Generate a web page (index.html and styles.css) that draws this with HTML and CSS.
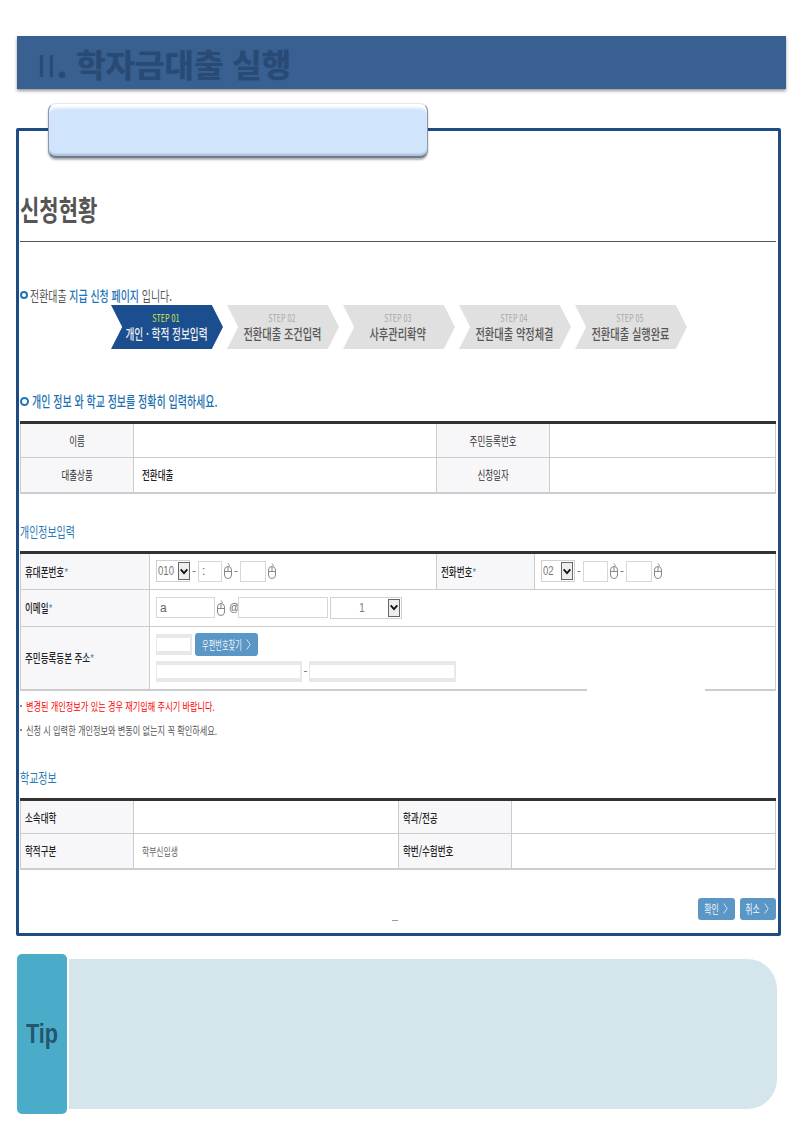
FILE: index.html
```html
<!DOCTYPE html>
<html lang="ko">
<head>
<meta charset="utf-8">
<title>학자금대출 실행</title>
<link rel="stylesheet" href="styles.css">
</head>
<body>
<svg class="defs" width="0" height="0" aria-hidden="true">
  <symbol id="mouse" viewBox="0 0 8 16">
    <path d="M4 0.5C4 1.5 5.5 1.5 5.5 3" fill="none" stroke="#888"/>
    <rect x="0.5" y="3.5" width="7" height="12" rx="3.5" fill="#fff" stroke="#888"/>
    <path d="M0.5 8.5H7.5M4 3.5V8.5" fill="none" stroke="#888"/>
  </symbol>
  <symbol id="chev" viewBox="0 0 12 12">
    <path d="M2 3.5L6 8L10 3.5" fill="none" stroke="#111" stroke-width="2.2"/>
  </symbol>
  <symbol id="more" viewBox="0 0 5 11">
    <path d="M0.7 0.5L4.2 5.5L0.7 10.5" fill="none" stroke="currentColor"/>
  </symbol>
</svg>
<main class="page">
  <header class="banner"><h1 class="banner-title"><span class="roman">II</span>. 학자금대출 실행</h1></header>

  <section class="panel">
    <div class="panel-tab"></div>
    <h2 class="page-title"><span class="sq">신청현황</span></h2>
    <p class="intro"><i class="dot"></i><span class="sq">전환대출 <b>지급 신청 페이지</b> 입니다.</span></p>

    <ol class="steps">
      <li class="step step-on"><span class="step-no">STEP 01</span><span class="step-name"><span class="sq-c">개인 · 학적 정보입력</span></span></li>
      <li class="step"><span class="step-no">STEP 02</span><span class="step-name"><span class="sq-c">전환대출 조건입력</span></span></li>
      <li class="step"><span class="step-no">STEP 03</span><span class="step-name"><span class="sq-c">사후관리확약</span></span></li>
      <li class="step"><span class="step-no">STEP 04</span><span class="step-name"><span class="sq-c">전환대출 약정체결</span></span></li>
      <li class="step"><span class="step-no">STEP 05</span><span class="step-name"><span class="sq-c">전환대출 실행완료</span></span></li>
    </ol>

    <p class="guide"><i class="dot dot-lg"></i><span class="sq">개인 정보 와 학교 정보를 정확히 입력하세요.</span></p>

    <table class="grid grid-a">
      <colgroup><col class="c113"><col class="c303"><col class="c113"><col></colgroup>
      <tr><th><span class="sq-c">이름</span></th><td></td><th><span class="sq-c">주민등록번호</span></th><td></td></tr>
      <tr><th><span class="sq-c">대출상품</span></th><td class="strong"><span class="sq">전환대출</span></td><th><span class="sq-c">신청일자</span></th><td></td></tr>
    </table>

    <h3 class="sub sub-a"><span class="sq">개인정보입력</span></h3>
    <table class="grid grid-b">
      <colgroup><col class="c129"><col class="c287"><col class="c98"><col></colgroup>
      <tr class="r-38">
        <th class="left"><span class="sq">휴대폰번호<em>*</em></span></th>
        <td><div class="field">
          <div class="sel w34"><span>010</span><b><svg width="11" height="11"><use href="#chev"/></svg></b></div>
          <span class="dash">-</span><input class="in w24" value=":" aria-label="휴대폰 가운데"><svg class="mouse"><use href="#mouse"/></svg>
          <span class="dash">-</span><input class="in w26" aria-label="휴대폰 끝"><svg class="mouse"><use href="#mouse"/></svg>
        </div></td>
        <th class="left"><span class="sq">전화번호<em>*</em></span></th>
        <td><div class="field">
          <div class="sel w34"><span>02</span><b><svg width="11" height="11"><use href="#chev"/></svg></b></div>
          <span class="dash">-</span><input class="in w25" aria-label="전화 가운데"><svg class="mouse"><use href="#mouse"/></svg>
          <span class="dash">-</span><input class="in w26" aria-label="전화 끝"><svg class="mouse"><use href="#mouse"/></svg>
        </div></td>
      </tr>
      <tr class="r-37">
        <th class="left"><span class="sq">이메일<em>*</em></span></th>
        <td colspan="3"><div class="field">
          <input class="in w59" value="a" aria-label="이메일 아이디"><svg class="mouse"><use href="#mouse"/></svg>
          <span class="at">@</span><input class="in w90" aria-label="이메일 도메인">
          <div class="sel w72"><span class="mid">1</span><b><svg width="11" height="11"><use href="#chev"/></svg></b></div>
        </div></td>
      </tr>
      <tr class="r-64">
        <th class="left"><span class="sq">주민등록등본 주소<em>*</em></span></th>
        <td colspan="3">
          <div class="field addr-top"><input class="in fat w36" aria-label="우편번호"><a class="btn btn-zip"><span class="btn-text zip-text">우편번호찾기</span><svg class="more"><use href="#more"/></svg></a></div>
          <div class="field addr-bot"><input class="in fat w146" aria-label="주소"><span class="dash dash-a">-</span><input class="in fat w147" aria-label="상세주소"></div>
        </td>
      </tr>
    </table>
    <i class="gap"></i>

    <ul class="notes">
      <li class="red"><span class="sq">변경된 개인정보가 있는 경우 재기입해 주시기 바랍니다.</span></li>
      <li><span class="sq">신청 시 입력한 개인정보와 변동이 없는지 꼭 확인하세요.</span></li>
    </ul>

    <h3 class="sub sub-b"><span class="sq">학교정보</span></h3>
    <table class="grid grid-c">
      <colgroup><col class="c113"><col class="c265"><col class="c113"><col></colgroup>
      <tr><th class="left"><span class="sq">소속대학</span></th><td></td><th class="left"><span class="sq">학과/전공</span></th><td></td></tr>
      <tr><th class="left"><span class="sq">학적구분</span></th><td class="soft"><span class="sq">학부신입생</span></td><th class="left"><span class="sq">학번/수험번호</span></th><td></td></tr>
    </table>

    <div class="actions">
      <a class="btn btn-act w37"><span class="btn-text">확인</span><svg class="more"><use href="#more"/></svg></a>
      <a class="btn btn-act w36b"><span class="btn-text">취소</span><svg class="more"><use href="#more"/></svg></a>
    </div>
    <i class="tick"></i>
  </section>

  <aside class="tip">
    <div class="tip-tab"><span class="tip-word">Tip</span></div>
    <div class="tip-body"></div>
  </aside>
</main>
</body>
</html>
```

FILE: styles.css
```css
* { box-sizing: border-box; }
html, body { margin: 0; padding: 0; background: #fff; }
body { font-family: "Noto Sans CJK KR", "Noto Sans", sans-serif; color: #333; font-size: 13px; }
.defs { position: absolute; }
.page { padding: 36px 16px 21px; width: 802px; height: 1135px; overflow: hidden; }

.sq, .sq-c { display: inline-block; white-space: nowrap; transform: scaleX(.71); }
.sq { transform-origin: left center; }
.sq-c { transform-origin: center center; }

.banner { margin-left: 1px; width: 769px; height: 53px; background: #386192; box-shadow: 0 2px 3px rgba(0,0,0,.4); padding-left: 20px; }
.banner-title { margin: 0; font-size: 32px; line-height: 54px; font-weight: 700; color: #294a75; white-space: nowrap; text-shadow: 0 0 1px #294a75; }
.roman { font-weight: 400; font-family: "Liberation Sans", sans-serif; letter-spacing: 1px; text-shadow: none; }

.panel { position: relative; margin-top: 39px; width: 765px; height: 808px; border: 3px solid #1f4a82; border-radius: 2px; padding: 0 2px 0 1px; }
.panel-tab { position: absolute; left: 29px; top: -28px; width: 380px; height: 55px; background: #d0e4fc; border: 1px solid #8b97a8; border-top-color: #e8e8e8; border-bottom: 2px solid #6e7b8e; border-radius: 8px; box-shadow: inset 0 5px 3px -1px #fff, inset 0 -3px 2px -1px #a9bdd6, 0 2px 2px rgba(0,0,0,.3); }

.page-title { margin: 58px 0 0; height: 53px; padding-left: 0; border-bottom: 1px solid #555; font-size: 28px; line-height: 40px; font-weight: 700; color: #555; }
.page-title .sq { transform: scaleX(.75); }

.dot { display: inline-block; flex: none; width: 8px; height: 8px; border: 2px solid #1c75b8; border-radius: 50%; background: #fff; }
.dot-lg { width: 9px; height: 9px; }
.intro { display: flex; align-items: center; gap: 2px; margin: 44px 0 0; height: 18px; font-size: 14px; line-height: 18px; color: #555; }
.intro b { font-weight: 500; color: #1c75b8; }

.steps { display: flex; gap: 4px; list-style: none; margin: 1px 0 0 91px; padding: 0; }
.step { width: 112px; height: 44px; background: #e0e0e0; clip-path: polygon(0 0, 90% 0, 100% 50%, 90% 100%, 0 100%, 10% 50%); text-align: center; padding: 6px 5px 0 3px; }
.step-no { display: block; white-space: nowrap; font-size: 10px; line-height: 13px; color: #aaa; transform: scaleX(.72); }
.step-name { display: flex; justify-content: center; white-space: nowrap; font-size: 14px; line-height: 18px; color: #555; font-weight: 500; }
.step-name .sq-c { flex: none; transform: scaleX(.73); }
.step-on { background: #1b4e8e; }
.step-on .step-no { color: #d8e845; }
.step-on .step-name { color: #f0f0f0; }
.step-on .step-name .sq-c { transform: scaleX(.69); }

.guide { display: flex; align-items: center; gap: 3px; margin: 42px 0 0; height: 20px; font-size: 14.5px; line-height: 20px; font-weight: 500; color: #1c70b0; }
.guide .sq { transform: scaleX(.69); }

.grid { width: 756px; table-layout: fixed; border-collapse: collapse; border-top: 3px solid #333; }
.grid th, .grid td { border: 1px solid #ccc; border-top: 0; padding: 0; font-size: 12px; font-weight: 400; height: 35px; color: #333; vertical-align: middle; }
.grid tr:last-child th, .grid tr:last-child td { border-bottom-width: 2px; }
.grid th { background: #f7f7f9; }
.grid th.left { text-align: left; padding-left: 4px; font-weight: 500; color: #222; }
.grid td.strong { padding-left: 8px; color: #222; font-weight: 500; }
.grid td.soft { padding-left: 8px; color: #666; font-size: 11px; }
.grid em { color: #5a96c6; font-style: normal; }
.c113 { width: 113px; }
.c129 { width: 129px; }
.c98 { width: 98px; }
.c303 { width: 303px; }
.c287 { width: 287px; }
.c265 { width: 265px; }

.grid-a { margin-top: 10px; }
.grid-c { margin-top: 11px; }
.grid-c tr:first-child th, .grid-c tr:first-child td { height: 34px; }

.sub { margin: 0; height: 20px; font-size: 14px; line-height: 20px; font-weight: 400; color: #2a7ab8; }
.sub-a { margin-top: 27px; }
.grid-b { margin-top: 10px; }
.sub-b { margin-top: 25px; }
.r-38 th, .r-38 td { height: 37px; }
.r-37 th, .r-37 td { height: 37px; }
.r-64 th, .r-64 td { height: 64px; }
.grid-b td { padding-left: 6px; }

.field { display: flex; align-items: center; }
.in { display: block; height: 21px; padding: 0 3px; border: 1px solid #d8d8d8; background: #fff; font: 12px "Liberation Sans", sans-serif; color: #666; outline: 0; border-radius: 0; }
.fat { border: 4px solid #e8e8e8; border-right-width: 2px; border-left-width: 1px; }
.w24 { width: 24px; }
.w25 { width: 25px; }
.w26 { width: 26px; }
.w36 { width: 36px; }
.w59 { width: 59px; }
.w90 { width: 90px; }
.w146 { width: 146px; }
.w147 { width: 147px; }
.sel { display: flex; align-items: center; justify-content: space-between; height: 22px; padding: 1px; border: 1px solid #d0d0d0; background: #fff; font: 12px "Liberation Sans", sans-serif; color: #777; }
.sel span { transform: scaleX(.8); transform-origin: left center; }
.sel span.mid { padding-left: 34px; }
.sel b { display: flex; align-items: center; justify-content: center; width: 12px; height: 18px; background: #eee; border: 1px solid #666; }
.w34 { width: 34px; }
.w72 { width: 72px; margin-left: 2px; }
.dash { width: 8px; text-align: center; font-size: 11px; line-height: 1; color: #555; }
.dash-a { width: 7px; }
.at { width: 13px; padding-left: 4px; font: 10px "Liberation Sans", sans-serif; color: #666; }
.mouse { display: block; flex: none; width: 8px; height: 16px; margin: 0 0 0 2px; }
.more { display: block; flex: none; width: 5px; height: 11px; color: #d4e3f0; }

.addr-top { gap: 3px; }
.addr-bot { margin-top: 5px; }
.btn { display: flex; align-items: center; justify-content: center; gap: 4px; background: #5a96c6; border-radius: 3px; color: #eef4fa; font-size: 12px; white-space: nowrap; }
.btn-text { display: flex; justify-content: center; width: 15px; white-space: nowrap; transform: scaleX(.66); }
.btn-act .btn-text { margin-left: -2px; }
.zip-text { width: 40px; transform: scaleX(.6); }
.btn-zip { width: 63px; height: 23px; }
.gap { display: block; position: absolute; left: 568px; top: 558px; width: 118px; height: 4px; background: #fff; }

.notes { list-style: none; margin: 3px 0 0; padding: 0; font-size: 11.5px; line-height: 18px; color: #555; }
.notes li { position: relative; height: 24px; padding: 3px 0 0 6px; }
.notes li::before { content: ""; position: absolute; left: 0; top: 11px; width: 2px; height: 2px; background: #888; }
.red { color: #f00; }

.actions { display: flex; justify-content: flex-end; gap: 5px; margin-top: 28px; }
.btn-act { height: 22px; }
.w37 { width: 37px; }
.w36b { width: 36px; }
.tick { position: absolute; left: 373px; top: 789px; width: 6px; height: 1px; background: #8aa2b8; }

.tip { display: flex; align-items: center; gap: 2px; margin: 18px 0 0 1px; width: 760px; }
.tip-tab { flex: none; display: flex; align-items: center; justify-content: center; width: 50px; height: 160px; background: #4aacc8; border-radius: 5px; }
.tip-word { font: 700 27px "Liberation Sans", sans-serif; color: #24566e; transform: scaleX(.8); }
.tip-body { flex: 1; height: 150px; background: #d4e5ec; border-radius: 0 30px 30px 0; }
```
